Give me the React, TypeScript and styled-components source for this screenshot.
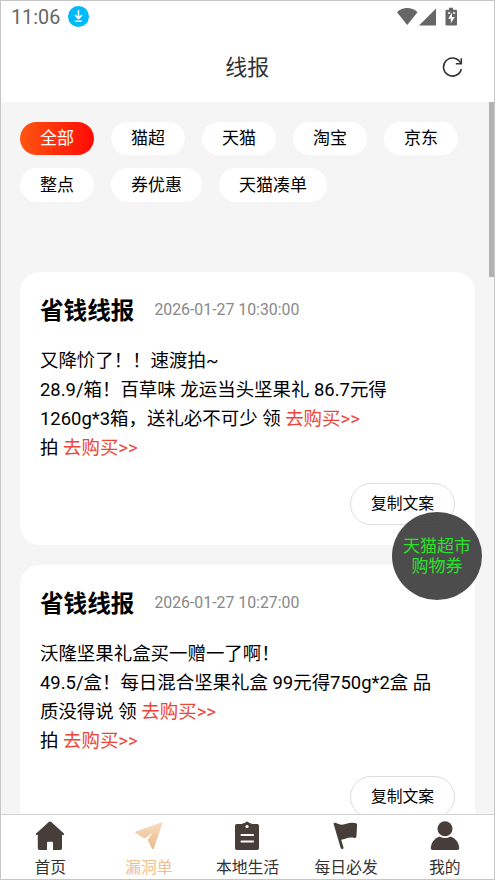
import React from "react";
import styled, { createGlobalStyle } from "styled-components";

const GlobalStyle = createGlobalStyle`
  * { box-sizing: border-box; }
  body {
    margin: 0;
    font-family: Roboto, "Noto Sans CJK SC", sans-serif;
    color: #000;
  }
  button { font: inherit; color: inherit; border: 0; padding: 0; background: none; }
`;

const Screen = styled.div`
  position: relative;
  display: flex;
  flex-direction: column;
  width: 495px;
  height: 880px;
  border: 1px solid #c6c6c6;
  background: #fff;
  overflow: hidden;
`;

const StatusBar = styled.div`
  display: flex;
  align-items: center;
  flex: none;
  height: 31px;
  padding: 0 35px 0 10px;
  color: #666;
`;

const Clock = styled.span`
  width: 56.5px;
  padding-top: 1px;
  font-size: 19.8px;
  line-height: 31px;
  white-space: nowrap;
`;

const StatusIcons = styled.div`
  display: flex;
  align-items: center;
  margin-left: auto;
`;

const TitleBar = styled.header`
  display: grid;
  grid-template-columns: 1fr auto 1fr;
  align-items: center;
  flex: none;
  height: 70px;
  padding: 0 31.5px 0 30px;
`;

const PageTitle = styled.h1`
  grid-column: 2;
  margin: 0;
  padding: 2px 0 0 1px;
  font-size: 22px;
  font-weight: 400;
  line-height: 32px;
  color: #333;
`;

const RefreshButton = styled.button`
  justify-self: end;
  display: flex;
`;

const Content = styled.main`
  display: flex;
  flex: 1;
  min-height: 0;
  overflow: hidden;
  background: #f5f5f5;
`;

const Feed = styled.div`
  flex: 1;
  padding: 19.6px 14px 0 19px;
`;

const ScrollTrack = styled.div`
  flex: none;
  width: 5px;
`;

const ScrollThumb = styled.div`
  height: 175px;
  background: #b2b2b2;
`;

const Chips = styled.div`
  display: flex;
  flex-wrap: wrap;
  align-content: flex-start;
  gap: 13.4px 17px;
  height: 150.4px;
`;

const Chip = styled.button<{ $active?: boolean }>`
  height: 33.3px;
  padding: 1px 20px 0;
  border-radius: 17px;
  font-size: 17px;
  line-height: 31.6px;
  color: ${(p) => (p.$active ? "#fff" : "#000")};
  background: ${(p) => (p.$active ? "linear-gradient(90deg, #ff5511, #ff0a05)" : "#fff")};
`;

const Card = styled.article`
  display: flex;
  flex-direction: column;
  height: 273px;
  margin-bottom: 20px;
  padding: 20px;
  border-radius: 20px;
  background: #fff;
`;

const CardHeader = styled.div`
  display: flex;
  align-items: center;
  gap: 20px;
  height: 36px;
`;

const CardTitle = styled.h2`
  margin: 0;
  padding-top: 2px;
  font-size: 23.6px;
  font-weight: 700;
  line-height: 36px;
`;

const Time = styled.time`
  font-size: 15.85px;
  line-height: 34px;
  color: #888;
`;

const Copy = styled.div`
  margin-top: 19px;
  font-size: 18.45px;
  line-height: 29px;
  white-space: nowrap;
`;

const BuyLink = styled.span`
  color: #ee4436;
`;

const CopyButton = styled.button`
  flex: none;
  align-self: flex-end;
  width: 105px;
  height: 42px;
  margin-top: 20px;
  border: 1px solid #ddd;
  border-radius: 21px;
  font-size: 15.8px;
  line-height: 38px;
`;

const Coupon = styled.button`
  position: absolute;
  left: 391px;
  top: 511px;
  width: 90px;
  height: 88px;
  border-radius: 50%;
  background: rgba(51, 51, 51, 0.88);
  color: #2be02b;
  font-size: 17px;
  line-height: 20px;
`;

const TabBar = styled.nav`
  display: grid;
  grid-template-columns: repeat(5, 1fr);
  flex: none;
  height: 65px;
  border-top: 1px solid #d2d2d2;
  background: #fff;
`;

const Tab = styled.button<{ $active?: boolean }>`
  display: flex;
  flex-direction: column;
  align-items: center;
  padding-top: 6px;
  font-size: 15.8px;
  line-height: 22px;
  color: ${(p) => (p.$active ? "#edc091" : "#333")};
  svg { display: block; margin-bottom: 6px; flex: none; }
`;

const BROWN = "#483e39";

const DownloadBadge = () => (
  <svg width="21" height="21" viewBox="0 0 21 21">
    <circle cx="10.5" cy="10.5" r="10.5" fill="#00b9fb" />
    <path d="M10.5 4.3v8M7 9l3.5 3.6L14 9M7.1 15.3h6.9" fill="none" stroke="#fff" strokeWidth="1.6" />
  </svg>
);

const SignalIcons = () => (
  <svg width="62" height="20" viewBox="0 0 62 20" fill="#666">
    <path d="M0 5.3C5.8-.3 14.6-.3 20.5 5.3L10.2 18z" />
    <path d="M39 1.5v17H22z" />
    <path
      fillRule="evenodd"
      d="M52 .7h4v2h3q1 0 1 1V17.5q0 1-1 1h-9.5q-1 0-1-1V3.7q0-1 1-1H52zM51 5.3v1.5h2.2V5.3zM56 5.3v1.5h2.2V5.3zM55 5.5l-3.8 6.3h2.6v4.5l4-6.3H55z"
    />
  </svg>
);

const RefreshIcon = () => (
  <svg width="21" height="21" viewBox="0 0 21 21" fill="none" stroke="#333" strokeWidth="1.6">
    <path d="M18.8 6.5A9 9 0 1 0 19.3 12" />
    <path d="M19.3 1.3v5.4h-5.5" />
  </svg>
);

const HomeIcon = () => (
  <svg width="30" height="30" viewBox="0 0 30 30" fill={BROWN}>
    <path d="M13.7.9q1.3-1 2.6 0L28.6 12.3q1.3 1.4-.4 1.8H27v13.2q0 1.7-1.7 1.7H18v-7q0-1.3-1.3-1.3h-3.4Q12 20.7 12 22v7H4.5q-1.7 0-1.7-1.7V14.1H1.7q-1.5-.5-.3-1.8z" />
  </svg>
);

const PlaneIcon = () => (
  <svg width="30" height="30" viewBox="0 0 30 30">
    <defs>
      <linearGradient id="plane" x1="0" y1="0" x2="0" y2="1">
        <stop offset="0" stopColor="#f6dcc0" />
        <stop offset="1" stopColor="#edb988" />
      </linearGradient>
    </defs>
    <path
      d="M27.8 1.3q.8-.2.7.7L19.8 27.5q-.8 1.7-1.7 0l-4.2-7.7q-.5-1 .4-2l4.7-6.2-7.2 5.2q-1 .9-2.1.2L1.5 12q-.9-.9.2-1.4z"
      fill="url(#plane)"
    />
  </svg>
);

const ClipboardIcon = () => (
  <svg width="30" height="30" viewBox="0 0 30 30">
    <path d="M4.8 3H10q1-1 2.8-1 .7-1.5 2.2-1.5T17.2 2Q19 2 20 3h5.2q1.8 0 1.8 1.8v22.4q0 1.8-1.8 1.8H4.8Q3 29 3 27.2V4.8Q3 3 4.8 3z" fill={BROWN} />
    <circle cx="15" cy="5.5" r="1.6" fill="#fff" />
    <path d="M9.5 14h11.5M9.5 20.5h11.5" stroke="#fff" strokeWidth="2.1" strokeLinecap="round" />
  </svg>
);

const FlagIcon = () => (
  <svg width="30" height="30" viewBox="0 0 30 30" fill={BROWN}>
    <path d="M2.5 2.5Q3.5 1 5.2 2.1c4 2.2 7.3 1.7 10.2.7 3.2-1.2 6.6-1.5 9.8-.5q1 .5.9 1.7l-.7 11.8q-.3 1.4-1.8 1.1c-5.6-1.5-9.2.9-13.4 1.9l2.3 7.6q.2 1.5-1.2 1.5-1.1.2-1.7-1.2z" />
  </svg>
);

const UserIcon = () => (
  <svg width="30" height="30" viewBox="0 0 30 30" fill={BROWN}>
    <circle cx="15" cy="7.8" r="7.5" />
    <path d="M9.5 15.5q5.5 3 11 0Q28.5 18.5 29.3 27q0 2-2 2H2.7q-2 0-2-2Q1.5 18.5 9.5 15.5z" />
  </svg>
);

const chips = ["全部", "猫超", "天猫", "淘宝", "京东", "整点", "券优惠", "天猫凑单"];

type Line = { text: string; link?: boolean };

const posts: { time: string; lines: Line[] }[] = [
  {
    time: "2026-01-27 10:30:00",
    lines: [
      { text: "又降忦了！！速渡拍~" },
      { text: "28.9/箱！百草味 龙运当头坚果礼 86.7元得" },
      { text: "1260g*3箱，送礼必不可少 领 ", link: true },
      { text: "拍 ", link: true },
    ],
  },
  {
    time: "2026-01-27 10:27:00",
    lines: [
      { text: "沃隆坚果礼盒买一赠一了啊！" },
      { text: "49.5/盒！每日混合坚果礼盒 99元得750g*2盒 品" },
      { text: "质没得说 领 ", link: true },
      { text: "拍 ", link: true },
    ],
  },
];

const tabs = [
  { label: "首页", Icon: HomeIcon },
  { label: "漏洞单", Icon: PlaneIcon },
  { label: "本地生活", Icon: ClipboardIcon },
  { label: "每日必发", Icon: FlagIcon },
  { label: "我的", Icon: UserIcon },
];

export default function App() {
  return (
    <>
      <GlobalStyle />
      <Screen>
        <StatusBar>
          <Clock>11:06</Clock>
          <DownloadBadge />
          <StatusIcons>
            <SignalIcons />
          </StatusIcons>
        </StatusBar>
        <TitleBar>
          <PageTitle>线报</PageTitle>
          <RefreshButton aria-label="刷新">
            <RefreshIcon />
          </RefreshButton>
        </TitleBar>
        <Content>
          <Feed>
            <Chips>
              {chips.map((label, i) => (
                <Chip key={label} $active={i === 0}>
                  {label}
                </Chip>
              ))}
            </Chips>
            {posts.map((post) => (
              <Card key={post.time}>
                <CardHeader>
                  <CardTitle>省钱线报</CardTitle>
                  <Time>{post.time}</Time>
                </CardHeader>
                <Copy>
                  {post.lines.map((line) => (
                    <div key={line.text}>
                      {line.text}
                      {line.link && <BuyLink>去购买&gt;&gt;</BuyLink>}
                    </div>
                  ))}
                </Copy>
                <CopyButton>复制文案</CopyButton>
              </Card>
            ))}
          </Feed>
          <ScrollTrack>
            <ScrollThumb />
          </ScrollTrack>
        </Content>
        <TabBar>
          {tabs.map(({ label, Icon }, i) => (
            <Tab key={label} $active={i === 1}>
              <Icon />
              {label}
            </Tab>
          ))}
        </TabBar>
        <Coupon>
          天猫超市
          <br />
          购物券
        </Coupon>
      </Screen>
    </>
  );
}
